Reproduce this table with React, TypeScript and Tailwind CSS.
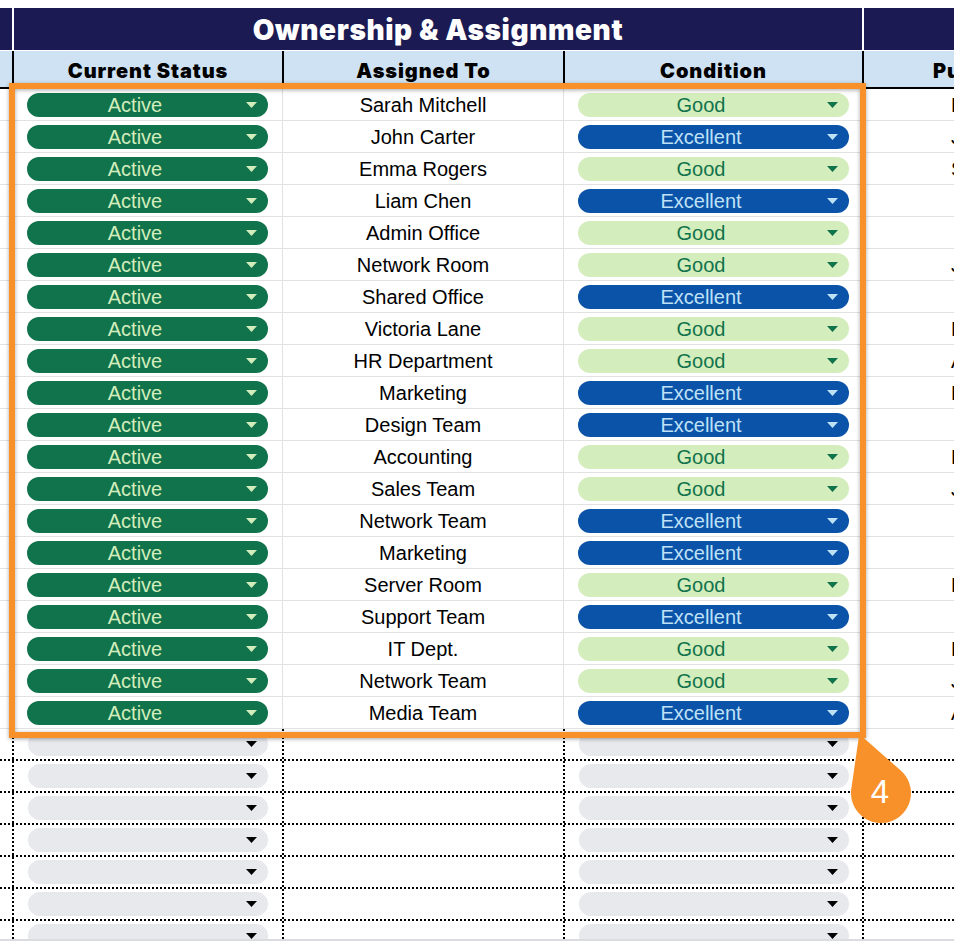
import React from "react";

type Cond = "Good" | "Excellent";
const rows: { who: string; cond: Cond; extra: string }[] = [
  { who: "Sarah Mitchell", cond: "Good", extra: "Dec 12, 2023" },
  { who: "John Carter", cond: "Excellent", extra: "Jan 5, 2024" },
  { who: "Emma Rogers", cond: "Good", extra: "Sep 9, 2022" },
  { who: "Liam Chen", cond: "Excellent", extra: "" },
  { who: "Admin Office", cond: "Good", extra: "" },
  { who: "Network Room", cond: "Good", extra: "Jun 2, 2023" },
  { who: "Shared Office", cond: "Excellent", extra: "" },
  { who: "Victoria Lane", cond: "Good", extra: "Nov 14, 2023" },
  { who: "HR Department", cond: "Good", extra: "Apr 3, 2022" },
  { who: "Marketing", cond: "Excellent", extra: "Dec 1, 2023" },
  { who: "Design Team", cond: "Excellent", extra: "" },
  { who: "Accounting", cond: "Good", extra: "Feb 8, 2023" },
  { who: "Sales Team", cond: "Good", extra: "Jul 19, 2022" },
  { who: "Network Team", cond: "Excellent", extra: "" },
  { who: "Marketing", cond: "Excellent", extra: "" },
  { who: "Server Room", cond: "Good", extra: "Dec 20, 2022" },
  { who: "Support Team", cond: "Excellent", extra: "" },
  { who: "IT Dept.", cond: "Good", extra: "Feb 27, 2024" },
  { who: "Network Team", cond: "Good", extra: "Jan 30, 2023" },
  { who: "Media Team", cond: "Excellent", extra: "Aug 4, 2023" },
];

function Arrow({ color }: { color: string }) {
  return (
    <svg width="11" height="6" viewBox="0 0 11 6" className="shrink-0">
      <path d="M0 0 H11 L5.5 6 Z" fill={color} />
    </svg>
  );
}

function Pill({
  label,
  bg,
  fg,
}: {
  label?: string;
  bg: string;
  fg: string;
}) {
  return (
    <div
      className={`relative w-full h-[24px] rounded-full flex items-center ${bg}`}
    >
      <div className="flex-1 pr-[25px] text-center leading-none">
        <span style={{ color: fg }} className="text-[20px]">
          {label ?? "\u00a0"}
        </span>
      </div>
      <div className="absolute right-[11px] top-[9px]">
        <Arrow color={fg} />
      </div>
    </div>
  );
}

export default function App() {
  return (
    <div className="relative w-[954px] h-[944px] bg-white overflow-hidden font-['Liberation_Sans',Arial,sans-serif] text-black">
      <div className="h-[8px]" />
      <div className="h-[933px] overflow-hidden border-b-2 border-[#dadce0]">
        {/* title band */}
        <div className="flex h-[43px] bg-[#1b1a52] border-b border-white">
          <div className="w-[12px] shrink-0" />
          <div className="w-[850px] shrink-0 border-l-2 border-white flex items-center justify-center pt-[2px]">
            <span className="font-['Inter',sans-serif] font-black text-[28px] text-white tracking-[0.6px]">
              Ownership &amp; Assignment
            </span>
          </div>
          <div className="flex-1 border-l-2 border-white" />
        </div>
        {/* sub header */}
        <div className="flex h-[38px] bg-[#cfe2f3] border-b-2 border-black font-['Inter',sans-serif] font-black text-[20px] tracking-[0.9px]">
          <div className="w-[12px] shrink-0" />
          <div className="w-[270px] shrink-0 border-l-2 border-black flex items-center justify-center pt-[4px]">
            Current Status
          </div>
          <div className="w-[281px] shrink-0 border-l-2 border-black flex items-center justify-center pt-[4px]">
            Assigned To
          </div>
          <div className="w-[299px] shrink-0 border-l-2 border-black flex items-center justify-center pt-[4px]">
            Condition
          </div>
          <div className="flex-1 border-l-2 border-black flex items-center pl-[69px] pt-[4px] whitespace-nowrap">
            Purchase Date
          </div>
        </div>
        {/* data rows */}
        {rows.map((r, i) => (
          <div
            key={i}
            className="flex h-[32px] border-b border-[#e2e2e2] text-[20px]"
          >
            <div className="w-[12px] shrink-0" />
            <div className="w-[270px] shrink-0 border-l border-[#e2e2e2] flex items-center px-[14px]">
              <Pill label="Active" bg="bg-[#11734b]" fg="#d4edbc" />
            </div>
            <div className="w-[281px] shrink-0 border-l border-[#e2e2e2] flex items-center justify-center">
              {r.who}
            </div>
            <div className="w-[299px] shrink-0 border-l border-[#e2e2e2] flex items-center pl-[14px] pr-[13px]">
              {r.cond === "Good" ? (
                <Pill label="Good" bg="bg-[#d4edbc]" fg="#11734b" />
              ) : (
                <Pill label="Excellent" bg="bg-[#0a53a8]" fg="#bfe1f6" />
              )}
            </div>
            <div className="flex-1 border-l border-[#e2e2e2] flex items-center pl-[88px] whitespace-nowrap overflow-hidden">
              {r.extra}
            </div>
          </div>
        ))}
        {/* empty rows */}
        {Array.from({ length: 7 }).map((_, i) => (
          <div
            key={`e${i}`}
            className="flex h-[32px] border-b-2 border-dotted border-black text-[20px]"
          >
            <div className="w-[12px] shrink-0" />
            <div className="w-[270px] shrink-0 border-l-2 border-dotted border-black flex items-center px-[14px]">
              <Pill bg="bg-[#e8e9ed]" fg="#000000" />
            </div>
            <div className="w-[281px] shrink-0 border-l-2 border-dotted border-black" />
            <div className="w-[299px] shrink-0 border-l-2 border-dotted border-black flex items-center pl-[14px] pr-[13px]">
              <Pill bg="bg-[#e8e9ed]" fg="#000000" />
            </div>
            <div className="flex-1 border-l-2 border-dotted border-black" />
          </div>
        ))}
      </div>

      {/* highlight box */}
      <div className="pointer-events-none absolute left-[9px] top-[83px] w-[857px] h-[655px] border-[6px] border-[#f8912a] shadow-[0_1px_4px_rgba(0,0,0,0.35),inset_0_1px_4px_rgba(0,0,0,0.35)]" />

      {/* callout badge */}
      <div className="pointer-events-none absolute left-[845px] top-[730px] w-[75px] h-[100px]">
        <svg width="75" height="100" viewBox="0 0 75 100" className="absolute inset-0">
          <path
            d="M15 6 L55.1 41.3 A29 29 0 1 1 7.3 58.8 Z"
            fill="#f8912a"
            stroke="#f8912a"
            strokeLinejoin="round"
            strokeWidth="2"
          />
        </svg>
        <div className="absolute left-[6px] top-[32px] w-[58px] h-[58px] flex items-center justify-center text-white text-[33px] leading-none">
          4
        </div>
      </div>
    </div>
  );
}
